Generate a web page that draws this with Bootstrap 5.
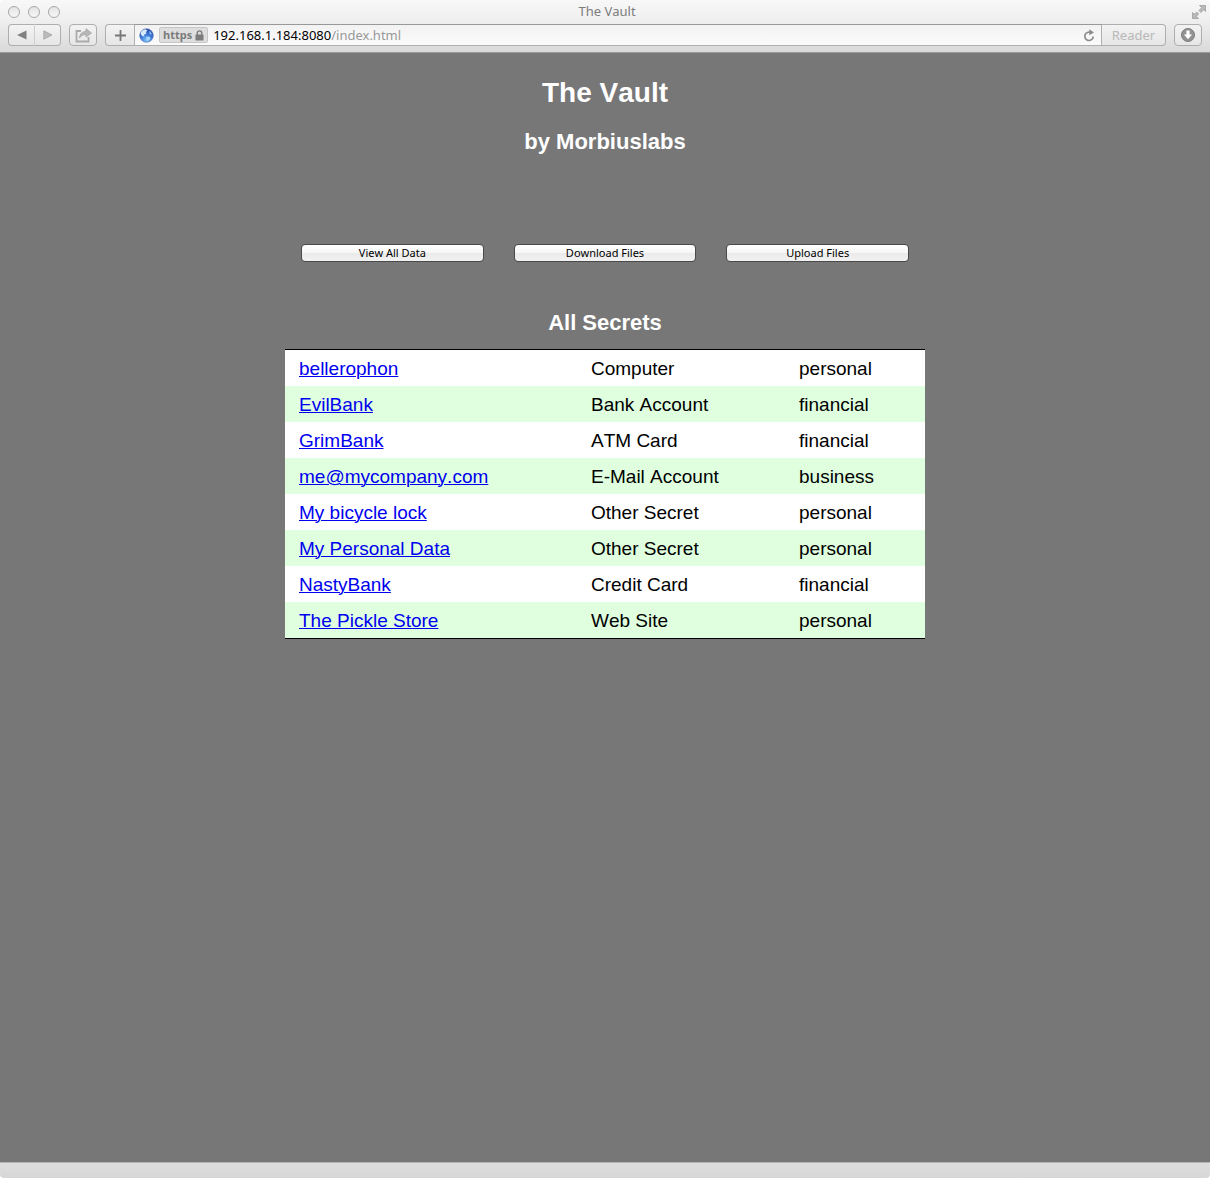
<!DOCTYPE html>
<html lang="en">
<head>
<meta charset="utf-8">
<meta name="viewport" content="width=device-width, initial-scale=1">
<title>The Vault</title>
<link href="https://cdn.jsdelivr.net/npm/bootstrap@5.3.0/dist/css/bootstrap.min.css" rel="stylesheet">
<style>
  body { background: #fff; font-family: "Liberation Sans", Arial, sans-serif; }
  .chrome-top { background: linear-gradient(#f8f8f8, #eee 22px, #d9d9d9); border-bottom: 1px solid #9b9b9b; border-radius: 4px 4px 0 0; font-family: "Noto Sans", sans-serif; font-size: 13px; line-height: 22px; height: 53px; }
  .title-row { height: 24px; padding: 0 4px 0 8px; }
  .title-text { color: #7d7d7d; font-kerning: none; }
  .lights, .expand { flex: 1 1 0; }
  .light { width: 12px; height: 12px; border: 1px solid #a8a8a8; border-radius: 50%; background: linear-gradient(#e4e4e4, #f7f7f7); }
  .lights { gap: 8px; }
  .tool-row { padding: 0 8px; gap: 8px; }
  .tool { height: 22px; border: 1px solid #aeaeae; border-radius: 4px; background: linear-gradient(#f3f3f3, #e6e6e6); padding: 0; color: #b9b9b9; line-height: 20px; display: flex; align-items: center; justify-content: center; }
  .tool-nav { width: 27px; }
  .tool-back { border-right-color: #cfcfcf; border-radius: 4px 0 0 4px; }
  .tool-fwd { width: 26px; border-left: 0; border-radius: 0 4px 4px 0; }
  .tool-icon { width: 28px; }
  .tool-add { width: 29px; border-right: 0; border-radius: 4px 0 0 4px; }
  .tool-reader { width: 64px; border-left: 0; border-radius: 0 4px 4px 0; }
  .address { height: 22px; border: 1px solid #b0b0b0; border-top-color: #999; background: linear-gradient(#f2f2f2, #fbfbfb); padding: 0 6px 0 4px; line-height: 20px; }
  .secure { height: 16px; border: 1px solid #c6c6c6; border-radius: 2px; background: #dedede; color: #7b7b7b; font-size: 11px; font-weight: 700; line-height: 14px; padding: 0 3px; margin: 0 5px; gap: 3px; }
  .url-host { color: #000; }
  .url-path { color: #999; }
  .page { background: #777; color: #fff; }
  .site-title { font-size: 28px; line-height: 32px; font-weight: 700; margin: 24px 0 0; font-kerning: none; }
  .site-sub { font-size: 22px; line-height: 26px; font-weight: 700; margin: 20px 0 0; }
  .vault { max-width: 640px; width: 100%; }
  .actions { gap: 30px; padding: 0 16px; margin-top: 89px; }
  .action { flex: 1 1 0; height: 18px; border: 1px solid #4a4a4a; border-radius: 4px; background: linear-gradient(#fff, #f6f6f6 50%, #eaeaea 50%, #f2f2f2); color: #000; font-family: "Noto Sans", sans-serif; font-size: 11px; line-height: 16px; padding: 0; font-kerning: none; }
  .list-title { font-size: 22px; line-height: 26px; font-weight: 700; margin: 48px 0 13px; color: #fff; }
  .secrets { font-size: 19px; line-height: 22px; color: #000; border-top: 1px solid #000; border-bottom: 1px solid #000; table-layout: fixed; width: 100%; margin: 0; font-kerning: none; }
  .secrets td { padding: 8px 14px 6px; background: #fff; border: 0; }
  .secrets tr:nth-child(even) td { background: #dfffdf; }
  .secrets a { color: #00e; text-decoration: underline; text-decoration-thickness: 1px; }
  .c-name { width: 292px; }
  .c-kind { width: 208px; }
  .status-strip { height: 16px; background: linear-gradient(#dedede, #d6d6d6); border-top: 1px solid #b5b5b5; border-radius: 0 0 4px 4px; }
</style>
<script src="https://cdn.jsdelivr.net/npm/bootstrap@5.3.0/dist/js/bootstrap.bundle.min.js"></script>
</head>
<body class="min-vh-100 d-flex flex-column">
<header class="chrome-top">
  <div class="title-row d-flex">
    <div class="lights d-flex align-items-center"><span class="light"></span><span class="light"></span><span class="light"></span></div>
    <div class="title-text">The Vault</div>
    <div class="expand d-flex justify-content-end align-items-center">
      <svg width="14" height="14" viewBox="0 0 14 14" fill="#b9b9b9" stroke="#969696" stroke-width=".7"><path d="M7.500 .5h6v6l-1.800-1.800-2.800 2.800-2-2 2.800-2.800z"/><path d="M6.500 13.500h-6v-6l1.800 1.800 2.400-2.400 2 2-2.400 2.400z"/></svg>
    </div>
  </div>
  <div class="tool-row d-flex">
    <div class="d-flex">
      <button class="tool tool-nav tool-back" aria-label="Back"><svg width="10" height="10" viewBox="0 0 10 10"><path d="M0 5 9.500 .5v9z" fill="#808080"/></svg></button>
      <button class="tool tool-fwd" aria-label="Forward"><svg width="10" height="10" viewBox="0 0 10 10"><path d="M9 5 .8 .8v8.400z" fill="#bbb" stroke="#a3a3a3" stroke-width=".8"/></svg></button>
    </div>
    <button class="tool tool-icon" aria-label="Share"><svg width="17" height="15" viewBox="0 0 17 15"><path d="M6 3H1.500v10.500h12V9" fill="none" stroke="#aaa" stroke-width="1.800"/><path d="M4.500 10C5 5.500 7.500 3.500 11 3.500V.8L16.500 5 11 9V6.500C8 6.500 6 7.500 4.500 10z" fill="#b8b8b8" stroke="#a3a3a3" stroke-width=".8"/></svg></button>
    <div class="d-flex flex-grow-1">
      <button class="tool tool-add" aria-label="Add bookmark"><svg width="11" height="11" viewBox="0 0 11 11"><path d="M5.500 0v11M0 5.500h11" stroke="#777" stroke-width="1.800"/></svg></button>
      <div class="address d-flex align-items-center flex-grow-1">
        <svg width="15" height="15" viewBox="0 0 15 15"><defs><radialGradient id="sea" cx=".5" cy=".85" r=".85"><stop offset="0" stop-color="#7cc6fa"/><stop offset=".5" stop-color="#3a78d8"/><stop offset="1" stop-color="#1b3aa5"/></radialGradient></defs><circle cx="7.500" cy="7.500" r="6.800" fill="url(#sea)" stroke="#5470b4" stroke-width=".6"/><path d="M1.500 5.500C2 3 4 1.500 6.500 1.300L8.500 2.500 7 4 7.500 5.500 5 6.800 5.500 8.500 3 8z" fill="#d5e9fb"/><path d="M10 3l1.500.5L13 6l-1 1-1.500-1z" fill="#7eb0ea"/><path d="M7 9l3-.5 1.500 1.500-1.500 2.500-2 .5z" fill="#a9d6f8"/></svg>
        <span class="secure d-flex align-items-center"><span>https</span><svg width="9" height="11" viewBox="0 0 9 11"><path d="M2.200 5V3.200a2.300 2.300 0 0 1 4.600 0V5" fill="none" stroke="#7b7b7b" stroke-width="1.400"/><rect x=".5" y="4.600" width="8" height="6" rx=".6" fill="#7b7b7b"/></svg></span>
        <span class="flex-grow-1"><span class="url-host">192.168.1.184:8080</span><span class="url-path">/index.html</span></span>
        <svg width="12" height="13" viewBox="0 0 12 13"><path d="M8.500 3.900A4.200 4.200 0 1 0 10.200 7.500" fill="none" stroke="#8b8b8b" stroke-width="1.700"/><path d="M6.300 .3 11 3.500 6.300 6.200z" fill="#8b8b8b"/></svg>
      </div>
      <button class="tool tool-reader">Reader</button>
    </div>
    <button class="tool tool-icon" aria-label="Downloads"><svg width="14" height="14" viewBox="0 0 14 14"><circle cx="7" cy="7" r="6.500" fill="#929292" stroke="#7c7c7c"/><path d="M5.400 2.600h3.200v4h2.500L7 11.200 2.900 6.600h2.500z" fill="#fff"/></svg></button>
  </div>
</header>
<main class="page flex-grow-1 d-flex flex-column align-items-center">
  <h1 class="site-title">The Vault</h1>
  <h2 class="site-sub">by Morbiuslabs</h2>
  <div class="vault">
    <div class="actions d-flex">
      <button class="action">View All Data</button>
      <button class="action">Download Files</button>
      <button class="action">Upload Files</button>
    </div>
    <h2 class="list-title text-center">All Secrets</h2>
    <table class="secrets">
      <colgroup><col class="c-name"><col class="c-kind"><col></colgroup>
      <tbody>
        <tr><td><a href="#">bellerophon</a></td><td>Computer</td><td>personal</td></tr>
        <tr><td><a href="#">EvilBank</a></td><td>Bank Account</td><td>financial</td></tr>
        <tr><td><a href="#">GrimBank</a></td><td>ATM Card</td><td>financial</td></tr>
        <tr><td><a href="#">me@mycompany.com</a></td><td>E-Mail Account</td><td>business</td></tr>
        <tr><td><a href="#">My bicycle lock</a></td><td>Other Secret</td><td>personal</td></tr>
        <tr><td><a href="#">My Personal Data</a></td><td>Other Secret</td><td>personal</td></tr>
        <tr><td><a href="#">NastyBank</a></td><td>Credit Card</td><td>financial</td></tr>
        <tr><td><a href="#">The Pickle Store</a></td><td>Web Site</td><td>personal</td></tr>
      </tbody>
    </table>
  </div>
</main>
<footer class="status-strip"></footer>
</body>
</html>
